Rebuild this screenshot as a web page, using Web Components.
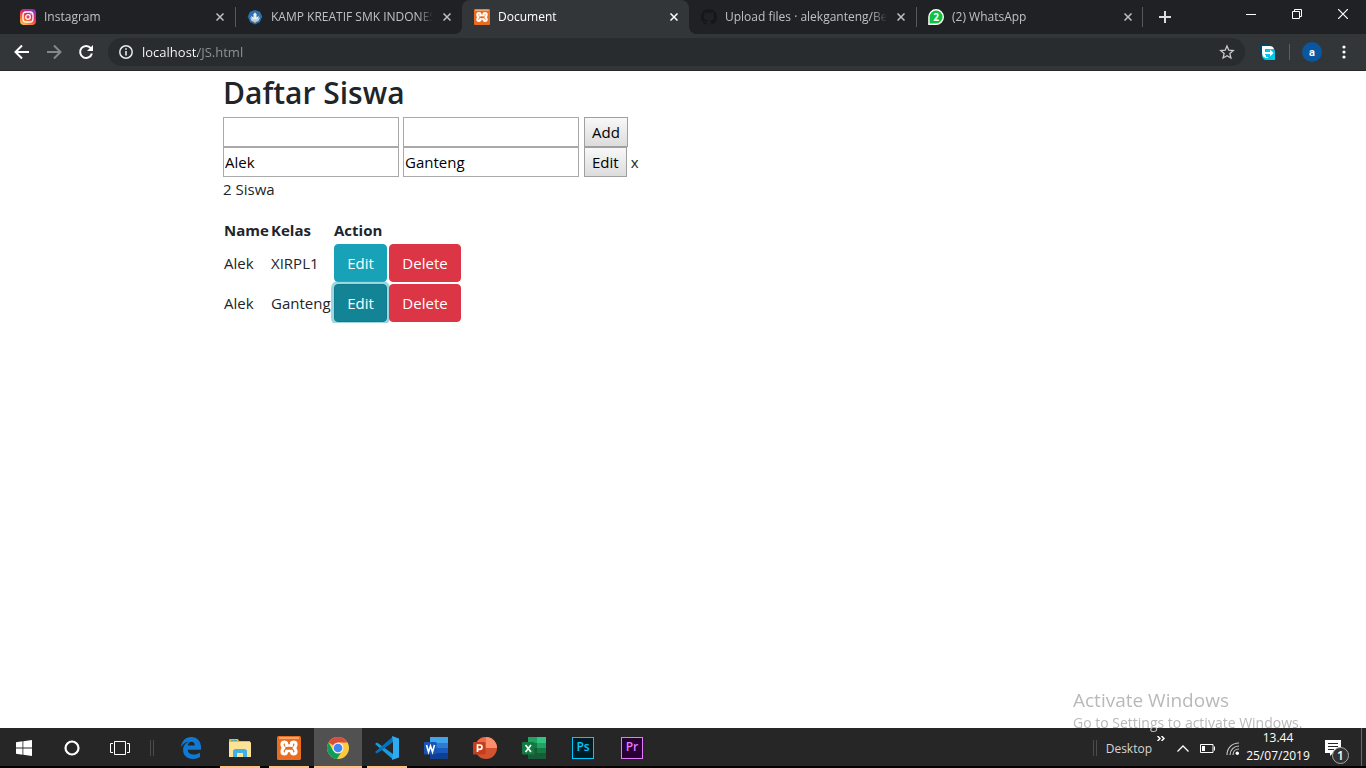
<!DOCTYPE html>
<html lang="id">
<head>
<meta charset="utf-8">
<title>Document</title>
<style>
  html { height: 100%; }
  body { margin: 0; min-height: 100%; display: flex; flex-direction: column; background: #fff; color: #212529; font-family: "Open Sans", "Noto Sans", sans-serif; font-size: 15px; }
  student-list { flex: 1; }
</style>
</head>
<body>
<tab-strip>
  <browser-tab>
    <svg slot="icon" width="16" height="16" viewBox="0 0 16 16"><defs><linearGradient id="ig" x1="0.2" y1="1" x2="0.8" y2="0"><stop offset="0" stop-color="#fdc04e"/><stop offset=".3" stop-color="#f8712f"/><stop offset=".6" stop-color="#dc2768"/><stop offset="1" stop-color="#8a36c8"/></linearGradient></defs><rect width="16" height="16" rx="4" fill="url(#ig)"/><g fill="none" stroke="#fff" stroke-width="1.3"><rect x="3" y="3" width="10" height="10" rx="3"/><circle cx="8" cy="8" r="2.3"/></g><circle cx="11" cy="5" r=".7" fill="#fff"/></svg>
    Instagram
  </browser-tab>
  <browser-tab separated>
    <svg slot="icon" width="16" height="16" viewBox="0 0 16 16"><path d="M8 1l5 1.800 2.200 4.700-2.200 5.500L8 15.500 3 13 .800 7.500 3 2.800z" fill="#2a6fae"/><path d="M3 8.500h10l-1.500 3.500L8 13.200 4.500 12z" fill="#b9cfe3"/><path d="M8 3.200l1.500 2v5h-3v-5z" fill="#f2ede0"/><path d="M3.500 6.500l3 2v2zM12.500 6.500l-3 2v2z" fill="#fff"/><path d="M7 12h2v1.500H7z" fill="#e9c75a"/></svg>
    KAMP KREATIF SMK INDONESIA
  </browser-tab>
  <browser-tab active>
    <xampp-logo slot="icon" style="--size:16px"></xampp-logo>
    Document
  </browser-tab>
  <browser-tab>
    <svg slot="icon" width="16" height="16" viewBox="0 0 16 16"><path fill="#15171a" d="M8 0C3.580 0 0 3.580 0 8c0 3.540 2.290 6.530 5.470 7.590.4.070.55-.17.55-.38 0-.19-.01-.82-.01-1.490-2.010.37-2.530-.49-2.690-.94-.09-.23-.48-.94-.82-1.130-.28-.15-.68-.52-.01-.53.63-.01 1.080.58 1.230.82.72 1.210 1.870.87 2.330.66.070-.52.28-.87.51-1.070-1.780-.2-3.640-.89-3.640-3.950 0-.87.31-1.590.82-2.150-.08-.2-.36-1.020.08-2.120 0 0 .67-.21 2.200.82.64-.18 1.320-.27 2-.27s1.360.09 2 .27c1.530-1.040 2.200-.82 2.200-.82.44 1.100.16 1.920.08 2.120.51.56.82 1.270.82 2.150 0 3.070-1.870 3.750-3.650 3.950.29.25.54.73.54 1.480 0 1.070-.01 1.930-.01 2.200 0 .21.15.46.55.38A8.010 8.010 0 0016 8c0-4.420-3.580-8-8-8z"/></svg>
    Upload files · alekganteng/Belajar
  </browser-tab>
  <browser-tab separated class="last">
    <whatsapp-icon slot="icon">2</whatsapp-icon>
    (2) WhatsApp
  </browser-tab>
</tab-strip>
<browser-toolbar></browser-toolbar>
<student-list></student-list>
<task-bar></task-bar>
<activation-notice>
  <span slot="title">Activate Windows</span>
  Go to Settings to activate Windows.
</activation-notice>

<script>
const define = (name, html, setup) => {
  const template = document.createElement('template');
  template.innerHTML = html;
  customElements.define(name, class extends HTMLElement {
    constructor() {
      super();
      this.attachShadow({ mode: 'open' }).append(template.content.cloneNode(true));
      if (setup) setup(this, this.shadowRoot);
    }
  });
};

define('xampp-logo', `
<style>:host{display:block;width:var(--size);height:var(--size)} svg{display:block;width:100%;height:100%}</style>
<svg viewBox="0 0 24 24"><rect width="24" height="24" rx="1.500" fill="#e96c1f"/><rect x="2" y="1" width="20" height="2" fill="#f5a56e"/><g fill="none" stroke="#fff" stroke-width="3.200" stroke-linejoin="round" stroke-linecap="round"><path d="M9.500 9.500V7Q9 6 7.500 6Q5 6 5 8.500Q5 10.500 6.800 12Q5 13.500 5 15.500Q5 18 7.500 18Q9.500 18 9.500 15.500"/><path d="M14.500 9.500V7Q15 6 16.500 6Q19 6 19 8.500Q19 10.500 17.200 12Q19 13.500 19 15.500Q19 18 16.500 18Q14.500 18 14.500 15.500"/><path d="M9.500 9.500h5M9.500 15h5" stroke-width="2.600"/></g></svg>`);

define('whatsapp-icon', `
<style>:host{display:grid;width:16px;height:16px;place-items:center;color:#fff;font-size:10px;font-weight:700;line-height:16px} svg,span{grid-area:1/1}</style>
<svg width="16" height="16" viewBox="0 0 16 16"><path d="M.2 16L.2 8A7.900 7.900 0 1 1 8 15.900z" fill="#fff"/><path d="M1.600 14.600V8a6.500 6.500 0 1 1 6.500 6.500z" fill="#0fc143"/></svg><span><slot></slot></span>`);

define('browser-tab', `
<style>
:host{display:flex;flex:0 1 227px;min-width:0;height:34px;box-sizing:border-box;align-items:center;padding:0 7px 0 12px;color:#bdc1c6;font-size:12px;position:relative}
:host([active]){background:#323639;color:#fff;border-radius:8px 8px 0 0}
:host([active])::before,:host([active])::after{content:"";position:absolute;bottom:0;width:8px;height:8px}
:host([active])::before{right:100%;background:radial-gradient(circle at 0 0,transparent 8px,#323639 8px)}
:host([active])::after{left:100%;background:radial-gradient(circle at 100% 0,transparent 8px,#323639 8px)}
:host([separated]){background:linear-gradient(#55585b,#55585b) 0 7px/1px 20px no-repeat}
:host(.last){background:linear-gradient(#55585b,#55585b) 0 7px/1px 20px no-repeat,linear-gradient(#55585b,#55585b) 100% 7px/1px 20px no-repeat}
.title{flex:1;min-width:0;margin:0 6px 0 8px;overflow:hidden;white-space:nowrap;line-height:18px;-webkit-mask-image:linear-gradient(90deg,#000 calc(100% - 16px),transparent)}
button{border:0;padding:0;margin:0;background:none;width:16px;height:16px;color:inherit;display:grid;place-items:center}
::slotted(svg){display:block}
</style>
<slot name="icon"></slot><span class="title"><slot></slot></span>
<button aria-label="Close tab"><svg width="8" height="8" viewBox="0 0 8 8"><path d="M.5.5l7 7M7.500.5l-7 7" stroke="currentColor" stroke-width="1.500"/></svg></button>`);

define('tab-strip', `
<style>
:host{display:flex;background:#202124;height:34px;padding-left:8px;color:#fff}
button{border:0;margin:0;padding:0;background:none;color:inherit;display:grid;place-items:center}
.new{width:44px;height:34px;color:#dadce0}
.win{display:flex;margin-left:auto}
.win button{width:46px;height:28px}
svg{display:block}
</style>
<slot></slot>
<button class="new" aria-label="New tab"><svg width="12" height="12" viewBox="0 0 12 12"><path d="M6 0v12M0 6h12" stroke="currentColor" stroke-width="2"/></svg></button>
<div class="win">
<button aria-label="Minimize"><svg width="10" height="10" viewBox="0 0 10 10"><path d="M0 5.500h10" stroke="#fff"/></svg></button>
<button aria-label="Restore"><svg width="10" height="10" viewBox="0 0 10 10"><path d="M.5 2.500h7v7h-7zM2.500 2.500v-2h7v7h-2" fill="none" stroke="#fff"/></svg></button>
<button aria-label="Close"><svg width="10" height="10" viewBox="0 0 10 10"><path d="M0 0l10 10M10 0L0 10" stroke="#fff" stroke-width="1.200"/></svg></button>
</div>`);

define('browser-toolbar', `
<style>
:host{display:flex;align-items:center;height:36px;background:#323639;border-bottom:1px solid #26292b;padding:0 6px;color:#fff}
button{border:0;margin:0;padding:0;background:none;color:inherit;width:32px;height:28px;display:grid;place-items:center;flex:none}
svg{display:block}
.omni{flex:1;min-width:0;display:flex;align-items:center;height:28px;margin:0 7px 0 6px;padding:0 2px 0 10px;border-radius:14px;background:#282c2f}
input{flex:1;min-width:0;border:0;outline:0;padding:0;margin:0 0 0 8px;height:28px;font:13px "Open Sans","Noto Sans",sans-serif;background:linear-gradient(90deg,#fff 56px,#8f979e 56px);-webkit-background-clip:text;background-clip:text;-webkit-text-fill-color:transparent}
.sep{width:1px;height:16px;background:#5c6064;margin:0 6px 0 5px}
.avatar{border-radius:50%;background:#0b579f;width:20px;height:20px;font:bold 11px Roboto,sans-serif;margin:0 6px}
</style>
<button aria-label="Back"><svg width="16" height="16" viewBox="0 0 16 16"><path d="M15 8H2M8 1.500L1.500 8 8 14.500" fill="none" stroke="#fff" stroke-width="2"/></svg></button>
<button aria-label="Forward"><svg width="16" height="16" viewBox="0 0 16 16"><path d="M1 8h13M8 1.500L14.500 8 8 14.500" fill="none" stroke="#85888a" stroke-width="2"/></svg></button>
<button aria-label="Reload"><svg width="16" height="16" viewBox="0 0 16 16"><path d="M12.800 4.200A6 6 0 1 0 13.900 9.500" fill="none" stroke="#fff" stroke-width="2"/><path d="M15 1v6H9z" fill="#fff"/></svg></button>
<div class="omni">
<svg width="16" height="16" viewBox="0 0 16 16"><circle cx="8" cy="8" r="6.200" fill="none" stroke="#e8eaed" stroke-width="1.500"/><path d="M8 7v4.500M8 4.200v1.600" stroke="#e8eaed" stroke-width="1.600"/></svg>
<input aria-label="Address" value="localhost/JS.html">
<button aria-label="Bookmark"><svg width="16" height="16" viewBox="0 0 16 16"><path d="M8 2l1.800 4.200 4.500.4-3.400 3 1 4.400L8 11.700 4.100 14l1-4.400-3.400-3 4.500-.4z" fill="none" stroke="#c8cacc" stroke-width="1.300"/></svg></button>
</div>
<button aria-label="Extension"><svg width="16" height="16" viewBox="0 0 16 16"><path d="M1 0h9L6 6l-3 5-3-2V1z" fill="#00476f"/><path d="M9 3l5 2q1 1 1 3v8H6q-3 0-4-4z" fill="#00c8e8"/><path d="M2 2h8q3 0 4 3H5v6h3v3H6q-4-1-4-5z" fill="#fff"/><path d="M5 5h5l4 4-4 4H6z" fill="#00c8e8"/><path d="M5 8h5V5.500L13.500 9 10 12.500V10H5z" fill="#fff"/></svg></button>
<span class="sep"></span>
<button class="avatar" aria-label="Profile">a</button>
<button class="menu" aria-label="Menu"><svg width="4" height="16" viewBox="0 0 4 16" fill="#fff"><circle cx="2" cy="3" r="1.600"/><circle cx="2" cy="8" r="1.600"/><circle cx="2" cy="13" r="1.600"/></svg></button>`);

define('student-form', `
<style>
:host{display:block}
form{display:flex;height:30px;align-items:center;gap:4px}
input{box-sizing:border-box;width:176px;height:30px;margin:0;padding:1px;border:1px solid #a9a9a9;border-radius:0;font:inherit;color:#000;background:#fff}
.go{box-sizing:border-box;height:30px;margin:0 0 0 1px;padding:0 7px;border:1px solid #a0a0a0;border-radius:0;background:linear-gradient(#f8f8f8,#dcdcdc);font:inherit;color:#000}
.close{border:0;background:none;margin:0;padding:0;font:inherit;color:#212529}
</style>
<form onsubmit="return false"><input class="name" aria-label="Name"><input class="kelas" aria-label="Kelas"><button class="go"><slot></slot></button><button class="close" type="button">x</button></form>`,
(host, root) => {
  root.querySelector('.name').value = host.getAttribute('name') || '';
  root.querySelector('.kelas').value = host.getAttribute('kelas') || '';
  if (!host.hasAttribute('closable')) root.querySelector('.close').remove();
});

define('student-list', `
<style>
:host{display:block}
main{max-width:920px;margin:0 auto}
h1{margin:0;padding:2px 0 4px;font-size:30px;line-height:40px;font-weight:600}
p{margin:0 0 16px;line-height:24px}
.table{overflow:hidden;padding-left:4px;margin-left:-4px}
table{border-collapse:collapse;table-layout:fixed;width:239px;line-height:24px}
th,td{padding:1px;text-align:left;white-space:nowrap}
td button{display:block;box-sizing:border-box;width:100%;height:38px;margin:0;padding:0 12px;border:1px solid;border-radius:4px;font:inherit;color:#fff;text-align:center}
.info{background:#17a2b8;border-color:#17a2b8}
.info.focus{background:#138496;border-color:#117a8b;box-shadow:0 0 0 3px rgba(58,176,195,.5)}
.danger{background:#dc3545;border-color:#dc3545;position:relative}
</style>
<main>
<h1>Daftar Siswa</h1>
<student-form>Add</student-form>
<student-form name="Alek" kelas="Ganteng" closable>Edit</student-form>
<p>2 Siswa</p>
<div class="table"><table>
<colgroup><col style="width:47px"><col style="width:63px"><col style="width:55px"><col style="width:74px"></colgroup>
<thead><tr><th>Name</th><th>Kelas</th><th colspan="2">Action</th></tr></thead>
<tbody>
<tr><td>Alek</td><td>XIRPL1</td><td><button class="info">Edit</button></td><td><button class="danger">Delete</button></td></tr>
<tr><td>Alek</td><td>Ganteng</td><td><button class="info focus">Edit</button></td><td><button class="danger">Delete</button></td></tr>
</tbody></table></div>
</main>`);

define('task-item', `
<style>
:host{display:block;flex:none;width:48px;height:40px}
button{border:0;margin:0;padding:0;background:none;width:48px;height:40px;display:grid;place-items:center}
:host([running]) button{background:linear-gradient(#ffc183,#ffc183) 4px 100%/40px 2px no-repeat}
:host([current]) button{background:linear-gradient(#ffc183,#ffc183) 0 100%/48px 2px no-repeat,linear-gradient(#515151,#515151)}
::slotted(svg){display:block}
</style>
<button><slot></slot></button>`,
(host, root) => root.querySelector('button').setAttribute('aria-label', host.getAttribute('label')));

define('task-bar', `
<style>
:host{display:flex;height:40px;background:linear-gradient(#262626 38px,#000 38px);color:#fff;font-size:12px}
svg{display:block}
.apps{display:flex;gap:1px}
.system{display:flex}
.grip{width:2px;height:16px;border:solid #4c4c4c;border-width:0 1px;margin:12px 13px 0 6px}
.tray{display:flex;margin-left:auto;height:40px;align-items:center}
.tray .grip{margin:0 9px 0 0}
.tray button{border:0;background:none;color:inherit;margin:0;padding:0;font:inherit;display:grid;place-items:center;flex:none}
.tray .more{width:18px;height:20px;align-self:flex-start}
.tray .desk{height:40px;color:#d5d5d5}
.tray .i{width:25px;height:40px}
.tray .clock{width:66px;line-height:18px;height:38px;align-self:flex-start;align-content:center}
.tray .note{position:relative;width:50px;height:40px;padding-right:6px}
.badge{position:absolute;left:21px;top:19px;box-sizing:border-box;width:17px;height:17px;border:1px solid #aaa;border-radius:50%;background:#333;font-size:12px;font-weight:600;line-height:15px;text-align:center}
.peek{width:4px;height:38px;border-left:1px solid #6b6b6b;align-self:flex-start}
</style>
<div class="system">
<task-item label="Start"><svg width="16" height="16" viewBox="0 0 16 16"><path d="M0 2.200L6.500 1.300V7.600H0zM7.300 1.200L16 0v7.600H7.300zM0 8.400h6.500v6.300L0 13.800zM7.300 8.400H16V16l-8.700-1.200z" fill="#fff"/></svg></task-item>
<task-item label="Search"><svg width="16" height="16" viewBox="0 0 16 16"><circle cx="8" cy="8" r="6.500" fill="none" stroke="#fff" stroke-width="2.200"/></svg></task-item>
<task-item label="Task view"><svg width="20" height="14" viewBox="0 0 20 14"><path d="M4.500.5h11v13h-11zM3 2.500H.5v9H3M17 2.500h2.500v9H17" fill="none" stroke="#fff"/></svg></task-item>
<span class="grip"></span>
</div>
<div class="apps">
<task-item label="Edge"><svg width="20" height="22" viewBox="0 0 20 22"><path d="M0 10C.6 4 4.600 0 10.300 0 16.500 0 20 4.600 20 10v2.700H6.700c.2 3.500 3 4.800 6.200 4.800 2.300 0 4.400-.7 6.100-1.800v4.400C17 21.300 14.700 22 12 22c-6 0-9.900-3.500-9.900-9 0-3.800 2.100-7 5.600-8.500C4.500 5 2 6.700 0 10zM6.800 8.500h7c0-2.300-1.100-3.800-3.400-3.800-2 0-3.300 1.600-3.600 3.800z" fill="#0e7ad6"/></svg></task-item>
<task-item label="File Explorer" running><svg width="22" height="18" viewBox="0 0 22 18"><path d="M0 1q0-1 1-1h8l1 2h11v16H0z" fill="#e9b83f"/><path d="M2 1h6v1H2z" fill="#5aa99a"/><path d="M0 3h21q1 0 1 1v14H0z" fill="#fce294"/><path d="M4 18v-6.500L6 10h10l2 1.500V18h-4v-4H8v4z" fill="#3fb1e8"/></svg></task-item>
<task-item label="XAMPP" running><xampp-logo style="--size:24px"></xampp-logo></task-item>
<task-item label="Chrome" running current><svg width="22" height="22" viewBox="0 0 22 22"><circle cx="11" cy="11" r="11" fill="#fcca3f"/><path d="M11 11L1.500 5.500A11 11 0 0 1 20.500 5.500H11z" fill="#db4c3f"/><path d="M1.500 5.500L6.200 13.800 11 16.500 8.800 21.800A11 11 0 0 1 1.500 5.500z" fill="#0f9d58"/><path d="M6.200 13.800L11 16l3.500-1-4.500 7A11 11 0 0 1 5 20z" fill="#0f9d58"/><circle cx="11" cy="11" r="5.500" fill="#f1f1f1"/><circle cx="11" cy="11" r="4.300" fill="#4285f4"/></svg></task-item>
<task-item label="Visual Studio Code" running><svg width="24" height="24" viewBox="0 0 24 24"><path d="M0 8l2-1.500L18 18v5.500z" fill="#169cdf"/><path d="M0 16l2 1.500L18 6V.5z" fill="#0074bd"/><path d="M17 0l7 2.500V21.500L17 24l1-6.500v-11z" fill="#2eaaf0"/></svg></task-item>
<task-item label="Word"><svg width="24" height="22" viewBox="0 0 24 22"><path d="M6 0h18v6H6z" fill="#41a5ee"/><path d="M6 6h18v5H6z" fill="#2b7cd3"/><path d="M6 11h18v5H6z" fill="#185abd"/><path d="M6 16h18v6H6z" fill="#103f91"/><rect y="5" width="12.500" height="12.500" rx="1" fill="#1755b5"/><path d="M2.500 8l2 7 2-6 2 6 2-7" fill="none" stroke="#fff" stroke-width="1.600"/></svg></task-item>
<task-item label="PowerPoint"><svg width="24" height="22" viewBox="0 0 24 22"><circle cx="13" cy="11" r="11" fill="#d35230"/><path d="M13 0a11 11 0 0 1 11 11H13z" fill="#ff8f6b"/><path d="M13 0A11 11 0 0 0 2 11h11z" fill="#ed6c47"/><rect y="5" width="12.500" height="12.500" rx="1" fill="#c43e1c"/><path d="M4.500 15V8h2.300q2.200 0 2.200 2.200t-2.200 2.200H4.500" fill="none" stroke="#fff" stroke-width="1.700"/></svg></task-item>
<task-item label="Excel"><svg width="24" height="22" viewBox="0 0 24 22"><path d="M6 0h9v22H6z" fill="#21a366"/><path d="M15 0h9v6h-9z" fill="#33c481"/><path d="M6 6h9v5H6z" fill="#107c41"/><path d="M15 6h9v5h-9z" fill="#21a366"/><path d="M6 11h18v11H6z" fill="#185c37"/><path d="M15 11h9v5h-9z" fill="#107c41"/><rect y="5" width="12.500" height="12.500" rx="1" fill="#107c41"/><path d="M3.500 8l5.500 7M9 8l-5.500 7" stroke="#fff" stroke-width="1.700"/></svg></task-item>
<task-item label="Photoshop"><adobe-tile style="color:#00c8ff;--fill:#001d26">Ps</adobe-tile></task-item>
<task-item label="Premiere Pro"><adobe-tile style="color:#e57aff;--fill:#2a0034">Pr</adobe-tile></task-item>
</div>
<div class="tray">
<span class="grip"></span>
<button class="desk">Desktop</button>
<button class="more" aria-label="More"><svg width="8" height="5" viewBox="0 0 8 5"><path d="M.5 0L3 2.500.5 5M4.500 0L7 2.500 4.500 5" fill="none" stroke="#fff" stroke-width="1.500"/></svg></button>
<button class="i" aria-label="Hidden icons"><svg width="12" height="7" viewBox="0 0 12 7"><path d="M.5 6.500L6 1l5.500 5.500" fill="none" stroke="#fff" stroke-width="1.300"/></svg></button>
<button class="i" aria-label="Battery"><svg width="15" height="9" viewBox="0 0 15 9"><path d="M.5.5h12.500v8H.5zM14.500 2.500v4" fill="none" stroke="#fff"/><path d="M2 2h3v5H2z" fill="#fff"/></svg></button>
<button class="i" aria-label="Network"><svg width="13" height="13" viewBox="0 0 13 13"><g fill="none" stroke="#c4c4c4" stroke-width="1.200"><path d="M1 13C1 6 6 1 13 1"/><path d="M4 13c0-5 4-9 9-9"/><path d="M7 13c0-3.500 2.500-6 6-6"/></g><circle cx="11.300" cy="11.300" r="1.700" fill="#fff"/></svg></button>
<button class="clock"><span>13.44</span><span>25/07/2019</span></button>
<button class="note" aria-label="Notifications"><svg width="16" height="16" viewBox="0 0 16 16"><path d="M0 0h16v13H8l-3 3v-3H0z" fill="#fff"/><path d="M3 3.500h10M3 6.500h10M3 9.500h6" stroke="#262626"/></svg><span class="badge">1</span></button>
<span class="peek"></span>
</div>`);

define('adobe-tile', `
<style>:host{display:block;box-sizing:border-box;width:22px;height:22px;border:1px solid;background:var(--fill);font:600 12px/18px "Open Sans",sans-serif;text-align:center}</style><slot></slot>`);

define('activation-notice', `
<style>
:host{position:fixed;right:57px;bottom:35px;color:#b9b9b9;font-size:14px;line-height:20px;pointer-events:none;white-space:nowrap;width:236px}
.t{display:block;font-size:19px;line-height:26px}
</style>
<span class="t"><slot name="title"></slot></span><slot></slot>`);
</script>
</body>
</html>
